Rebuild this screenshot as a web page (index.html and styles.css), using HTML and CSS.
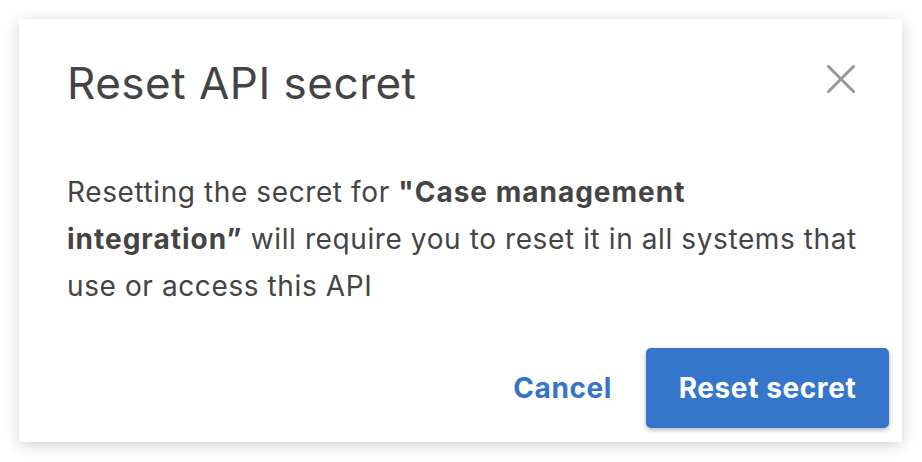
FILE: index.html
```html
<!DOCTYPE html>
<html lang="en">
<head>
<meta charset="utf-8">
<title>Reset API secret</title>
<link rel="stylesheet" href="styles.css">
</head>
<body>
<div class="dialog" role="dialog" aria-labelledby="dlg-title">
  <div class="dialog-header">
    <h1 class="dialog-title" id="dlg-title">Reset API secret</h1>
    <button class="close-btn" aria-label="Close">
      <svg width="28" height="28" viewBox="0 0 28 28" aria-hidden="true">
        <path d="M1.5 1.5 L26.5 26.5 M26.5 1.5 L1.5 26.5" stroke="#999" stroke-width="3" stroke-linecap="square" fill="none"/>
      </svg>
    </button>
  </div>
  <p class="dialog-body">Resetting the secret for <strong>"Case management integration”</strong> will require you to reset it in all systems that use or access this API</p>
  <div class="dialog-footer">
    <button class="btn btn-link">Cancel</button>
    <button class="btn btn-primary">Reset secret</button>
  </div>
</div>
</body>
</html>
```
FILE: styles.css
```css
html, body {
  margin: 0;
  padding: 0;
  background: #ffffff;
}

body {
  font-family: "Inter", "Open Sans", sans-serif;
  color: #444444;
  padding: 19px;
}

.dialog {
  width: 883px;
  height: 423px;
  box-sizing: border-box;
  background: #ffffff;
  box-shadow: 0 3px 14px rgba(0, 0, 0, 0.18);
  display: flex;
  flex-direction: column;
}

.dialog-header {
  display: flex;
  justify-content: space-between;
  align-items: flex-start;
  padding: 38px 47px 0 48px;
}

.dialog-title {
  margin: 0;
  font-size: 44px;
  font-weight: 400;
  line-height: 52px;
  letter-spacing: 0.5px;
  color: #444444;
}

.close-btn {
  margin-top: 8px;
  padding: 0;
  border: 0;
  background: none;
  width: 28px;
  height: 28px;
  cursor: pointer;
}

.close-btn svg {
  display: block;
}

.dialog-body {
  margin: 0;
  padding: 60px 38px 0 48px;
  font-size: 28px;
  line-height: 47px;
  letter-spacing: 0.6px;
  color: #444444;
}

.dialog-body strong {
  font-weight: 700;
  letter-spacing: 1px;
}

.dialog-footer {
  margin-top: auto;
  display: flex;
  justify-content: flex-end;
  align-items: center;
  gap: 34px;
  padding: 0 13px 14px 0;
}

.btn {
  font-family: inherit;
  font-size: 28px;
  font-weight: 700;
  letter-spacing: 0.6px;
  border: 0;
  cursor: pointer;
}

.btn-link {
  background: none;
  color: #3574c9;
  padding: 0;
}

.btn-primary {
  width: 243px;
  height: 80px;
  background: #3576cb;
  color: #ffffff;
  border-radius: 5px;
  box-shadow: 0 2px 5px rgba(0, 0, 0, 0.3);
}
```
